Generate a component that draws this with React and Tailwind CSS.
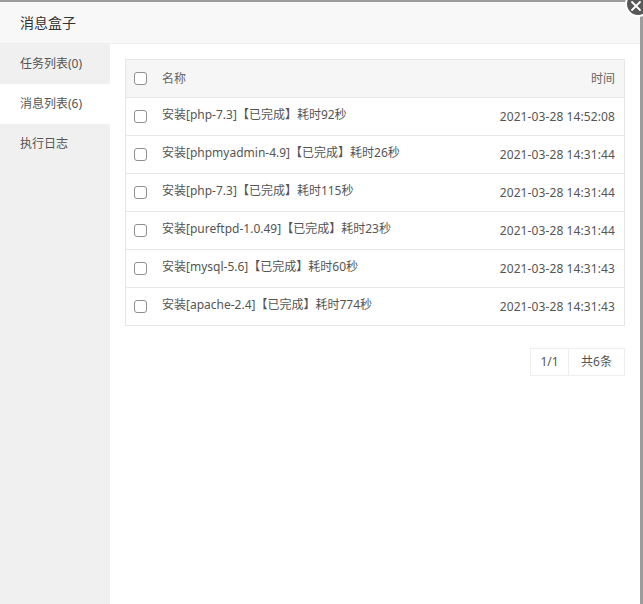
import { useState } from 'react';

const messages = [
  { id: 1, name: '安装[php-7.3]【已完成】耗时92秒', time: '2021-03-28 14:52:08' },
  { id: 2, name: '安装[phpmyadmin-4.9]【已完成】耗时26秒', time: '2021-03-28 14:31:44' },
  { id: 3, name: '安装[php-7.3]【已完成】耗时115秒', time: '2021-03-28 14:31:44' },
  { id: 4, name: '安装[pureftpd-1.0.49]【已完成】耗时23秒', time: '2021-03-28 14:31:44' },
  { id: 5, name: '安装[mysql-5.6]【已完成】耗时60秒', time: '2021-03-28 14:31:43' },
  { id: 6, name: '安装[apache-2.4]【已完成】耗时774秒', time: '2021-03-28 14:31:43' }
];

const tabs = ['任务列表(0)', '消息列表(6)', '执行日志'];

function CheckBox({ checked, onChange }) {
  return (
    <span
      onClick={onChange}
      className={`inline-block w-[13px] h-[13px] rounded-[3px] border ${
        checked ? 'border-[#20a53a] bg-[#20a53a]' : 'border-[#8f8f8f] bg-white'
      }`}
    />
  );
}

export default function App() {
  const [active, setActive] = useState(1);
  const [selected, setSelected] = useState([]);

  const toggle = (id) => {
    setSelected(prev => prev.includes(id) ? prev.filter(x => x !== id) : [...prev, id]);
  };

  const allChecked = selected.length === messages.length;

  return (
    <div
      className="relative w-[643px] h-[604px] overflow-hidden bg-[#9c9c9c] pt-[2px] pr-[3px]"
      style={{ fontFamily: '"Noto Sans", "Noto Sans CJK SC", sans-serif' }}
    >
      <div className="flex flex-col h-full bg-white">
        <div className="h-[42px] shrink-0 px-5 bg-[#f8f8f8] border-b border-[#eeeeee] text-[14px] leading-[41px] text-[#333]">
          消息盒子
        </div>

        <div className="flex flex-1">
          <div className="w-[110px] shrink-0 bg-[#f0f0f0]">
            {tabs.map((tab, i) => (
              <div
                key={tab}
                onClick={() => setActive(i)}
                className={`h-10 pl-5 leading-10 text-[12px] text-[#555] cursor-pointer ${
                  active === i ? 'bg-white' : ''
                }`}
              >
                {tab}
              </div>
            ))}
          </div>

          <div className="flex-1 pt-[15px] pl-[15px] pr-[15px]">
            <div className="border border-[#e6e6e6]">
              <div className="flex items-center h-[37px] bg-[#f6f6f6] pl-[8px] pr-[9px] text-[12px] text-[#666]">
                <CheckBox
                  checked={allChecked}
                  onChange={() => setSelected(allChecked ? [] : messages.map(m => m.id))}
                />
                <span className="ml-[15px] flex-1">名称</span>
                <span>时间</span>
              </div>
              {messages.map(m => (
                <div
                  key={m.id}
                  className="flex items-center h-[38px] border-t border-[#e6e6e6] pl-[8px] pr-[9px] text-[12px] text-[#555]"
                >
                  <CheckBox checked={selected.includes(m.id)} onChange={() => toggle(m.id)} />
                  <span className="ml-[15px] flex-1 -mt-[3px]">{m.name}</span>
                  <span className="tracking-[0.1px]">{m.time}</span>
                </div>
              ))}
            </div>

            <div className="flex justify-end mt-[22px]">
              <div className="flex border border-[#eeeeee] h-[28px] text-[12px] text-[#555]">
                <span className="w-[37px] leading-[26px] text-center">1/1</span>
                <span className="w-[56px] leading-[26px] text-center border-l border-[#eeeeee]">共6条</span>
              </div>
            </div>
          </div>
        </div>
      </div>

      <div className="absolute top-[-9px] right-[-8px] w-[26px] h-[26px] rounded-full bg-[#585858] border-2 border-white flex items-center justify-center">
        <svg width="12" height="12" viewBox="0 0 12 12" className="mt-[4px] mr-[4px]">
          <path d="M2 2 L10 10 M10 2 L2 10" stroke="white" strokeWidth="1.8" strokeLinecap="round" />
        </svg>
      </div>
    </div>
  );
}
